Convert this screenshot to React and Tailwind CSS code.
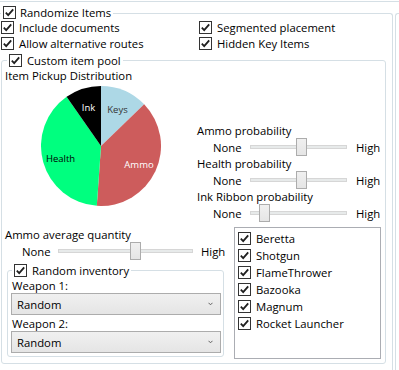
import React from 'react';

const Check = () => (
  <span className="flex h-[13px] w-[13px] shrink-0 items-center justify-center border border-[#333333] bg-white">
    <svg width="11" height="11" viewBox="0 0 11 11">
      <path d="M1.8 5.6 L4.2 8.1 L9.2 2.4" fill="none" stroke="#1f1f1f" strokeWidth="1.8" />
    </svg>
  </span>
);

const CheckRow = ({ label }) => (
  <div className="flex h-[16px] items-center gap-[5px]">
    <Check />
    <span>{label}</span>
  </div>
);

const slices = [
  { name: 'Keys', from: 0, to: 46, fill: '#add8e6', color: '#333333', x: 76.5, y: 23 },
  { name: 'Ammo', from: 46, to: 184, fill: '#cd5c5c', color: '#ffffff', x: 98, y: 78 },
  { name: 'Health', from: 184, to: 325, fill: '#00ff7f', color: '#000000', x: 19.5, y: 72 },
  { name: 'Ink', from: 325, to: 360, fill: '#000000', color: '#ffffff', x: 47.5, y: 21.5 },
];

const pt = (a) => {
  const r = (a * Math.PI) / 180;
  return [60 + 60 * Math.sin(r), 60 - 60 * Math.cos(r)];
};

const slicePath = (from, to) => {
  const [x0, y0] = pt(from);
  const [x1, y1] = pt(to);
  const large = to - from > 180 ? 1 : 0;
  return `M60 60 L${x0} ${y0} A60 60 0 ${large} 1 ${x1} ${y1} Z`;
};

const Pie = () => (
  <svg width="120" height="120" viewBox="0 0 120 120" className="ml-[39px] mt-[2px]">
    {slices.map((s) => (
      <path key={s.name} d={slicePath(s.from, s.to)} fill={s.fill} />
    ))}
    {slices.map((s) => (
      <text
        key={s.name + 't'}
        x={s.x}
        y={s.y}
        fill={s.color}
        fontSize="9.5"
        textAnchor="middle"
        dominantBaseline="central"
        fontFamily="'Open Sans', sans-serif"
      >
        {s.name}
      </text>
    ))}
  </svg>
);

const Slider = ({ pad, noneW, trackW, gap, thumb }) => (
  <div className={`flex h-[18px] items-center ${pad}`}>
    <span className={noneW}>None</span>
    <div className={`relative h-[4px] border border-[#d6d6d6] bg-[#e7eaea] ${trackW}`}>
      <span
        className="absolute top-[-8px] h-[18px] w-[11px] border border-[#acacac] bg-gradient-to-b from-[#f0f0f0] to-[#e5e5e5]"
        style={{ left: thumb }}
      />
    </div>
    <span className={gap}>High</span>
  </div>
);

const probabilities = [
  { label: 'Ammo probability', thumb: 45 },
  { label: 'Health probability', thumb: 45 },
  { label: 'Ink Ribbon probability', thumb: 8 },
];

const Combo = () => (
  <div className="ml-[3px] flex h-[22px] w-[210px] items-center justify-between border border-[#acacac] bg-gradient-to-b from-[#f0f0f0] to-[#e5e5e5] pl-[5px] pr-[7px]">
    <span>Random</span>
    <svg width="5" height="4" viewBox="0 0 5 4">
      <path d="M0.5 0.8 L2.5 2.8 L4.5 0.8" fill="none" stroke="#606060" strokeWidth="1" />
    </svg>
  </div>
);

const weapons = ['Beretta', 'Shotgun', 'FlameThrower', 'Bazooka', 'Magnum', 'Rocket Launcher'];

export default function App() {
  return (
    <div className="h-[370px] w-[399px] overflow-hidden bg-white pt-px text-[11.3px] leading-[15px] text-black [font-family:'Open_Sans',sans-serif]">
      <div className="border-t border-[#d5dfe5]" />
      <div className="mt-[11px] flex gap-[2px]">
        <div className="h-[400px] w-[393px] shrink-0 rounded-tr-[3px] border-t border-r border-[#d5dfe5]">
          <div className="-mt-[8px] ml-[1px] flex h-[13px] w-fit items-center gap-[4px] bg-white px-[2px]">
            <Check />
            <span>Randomize Items</span>
          </div>

          <div className="grid grid-cols-[198px_1fr] pl-[1px]">
            <div>
              <CheckRow label="Include documents" />
              <CheckRow label="Allow alternative routes" />
            </div>
            <div>
              <CheckRow label="Segmented placement" />
              <CheckRow label="Hidden Key Items" />
            </div>
          </div>

          <div className="ml-[1px] mt-[9px] h-[304px] w-[385px] rounded-[3px] border border-[#d5dfe5]">
            <div className="-mt-[7px] ml-[5px] flex h-[13px] w-fit items-center gap-[5px] bg-white px-[2px]">
              <Check />
              <span>Custom item pool</span>
            </div>

            <div className="grid h-[160px] grid-cols-[192px_1fr]">
              <div>
                <div className="mt-[1px] h-[16px] pl-[3px] leading-[16px]">Item Pickup Distribution</div>
                <Pie />
              </div>
              <div className="pt-[56px]">
                {probabilities.map((p) => (
                  <div key={p.label}>
                    <div className="h-[15px] pl-[3px]">{p.label}</div>
                    <Slider pad="pl-[19px]" noneW="w-[37px]" trackW="w-[97px]" gap="ml-[9px]" thumb={p.thumb} />
                  </div>
                ))}
              </div>
            </div>

            <div className="grid grid-cols-[232px_147px]">
              <div>
                <div className="h-[15px] pl-[3px]">Ammo average quantity</div>
                <Slider pad="pl-[20px]" noneW="w-[36px]" trackW="w-[135px]" gap="ml-[8px]" thumb={71} />

                <div className="ml-[5px] mt-[10px] h-[87px] w-[217px] rounded-[3px] border border-[#d5dfe5]">
                  <div className="-mt-[7px] ml-[4px] flex h-[13px] w-fit items-center gap-[5px] bg-white px-[2px]">
                    <Check />
                    <span>Random inventory</span>
                  </div>
                  <div className="mt-[2px] h-[14px] pl-[4px] leading-[14px]">Weapon 1:</div>
                  <Combo />
                  <div className="mt-[2px] h-[14px] pl-[4px] leading-[14px]">Weapon 2:</div>
                  <Combo />
                </div>
              </div>

              <div className="h-[132px] w-[147px] border border-[#abadb3] pl-[3px] pt-[2px]">
                {weapons.map((w) => (
                  <div key={w} className="flex h-[17px] items-center gap-[5px]">
                    <Check />
                    <span>{w}</span>
                  </div>
                ))}
              </div>
            </div>
          </div>
        </div>
        <div className="h-[400px] flex-1 rounded-tl-[3px] border-t border-l border-[#d5dfe5]" />
      </div>
    </div>
  );
}
